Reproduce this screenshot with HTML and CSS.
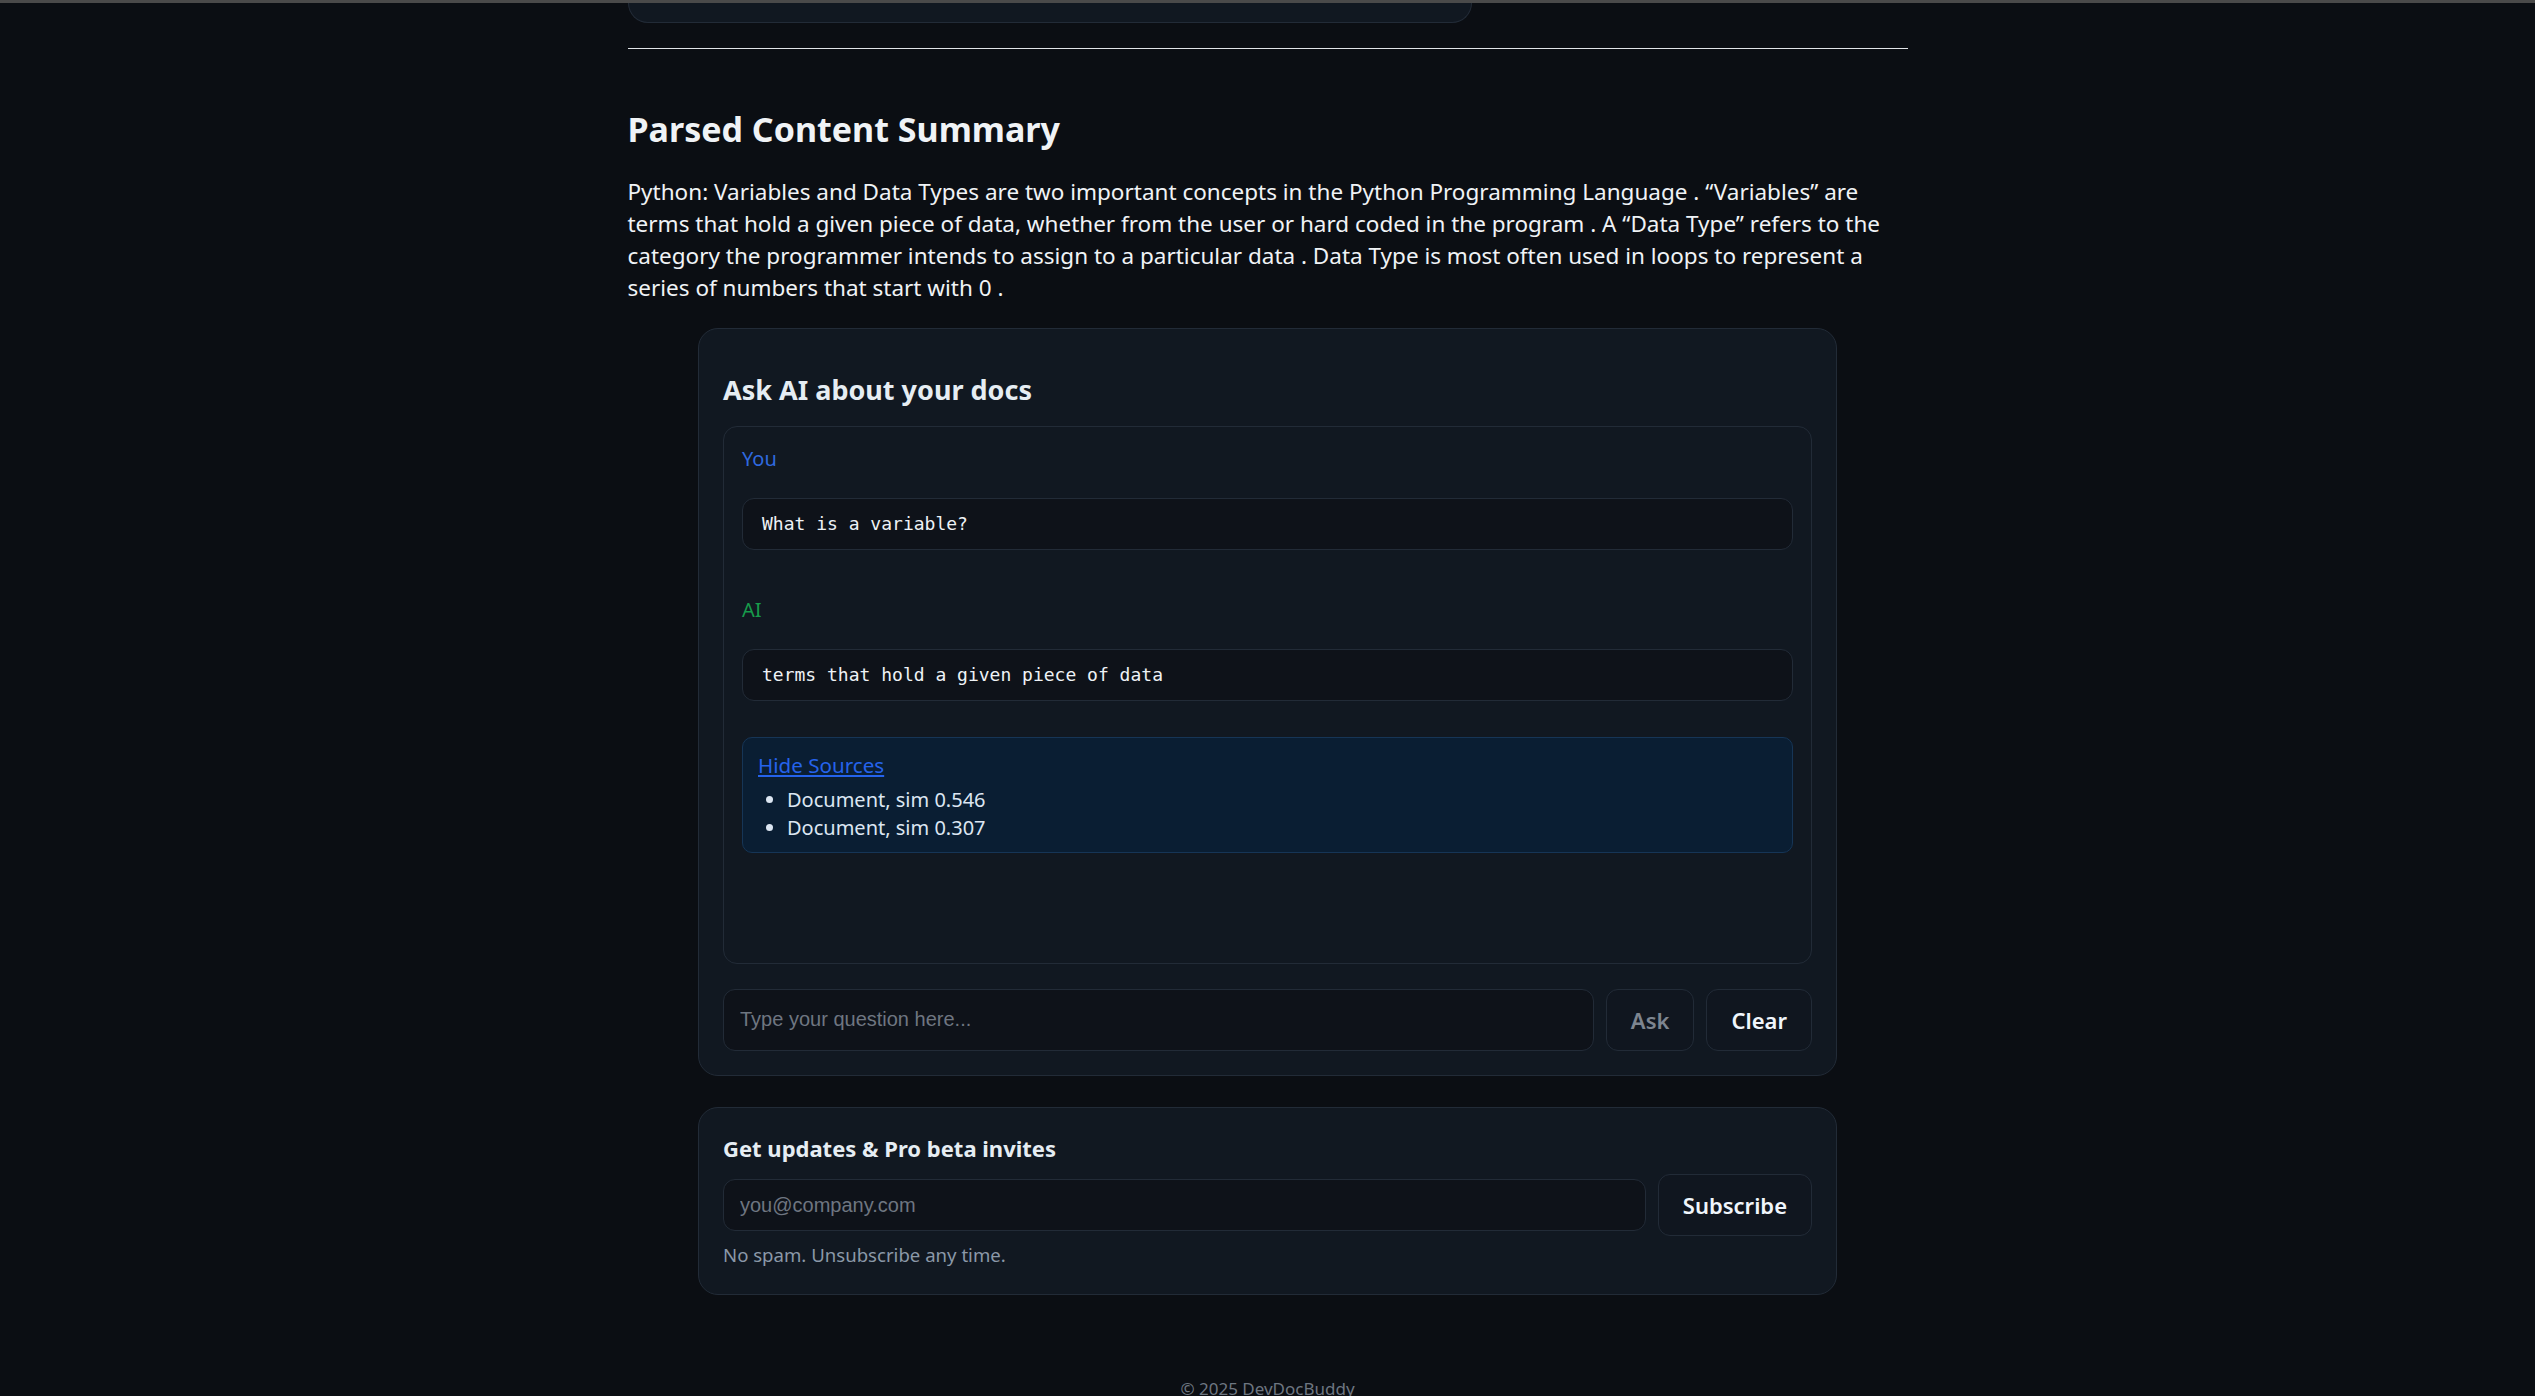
FILE: index.html
```html
<!DOCTYPE html>
<html>
<head>
  <title>DevDocBuddy</title>
  <link rel="stylesheet" href="styles.css">
</head>
<body>
  <div class="topbar"></div>
  <main class="container">
    <div class="upload-row">
      <div class="upload-card"></div>
    </div>
    <hr class="divider">

    <section class="summary">
      <h2>Parsed Content Summary</h2>
      <p>Python: Variables and Data Types are two important concepts in the Python Programming Language . “Variables” are terms that hold a given piece of data, whether from the user or hard coded in the program . A “Data Type” refers to the category the programmer intends to assign to a particular data . Data Type is most often used in loops to represent a series of numbers that start with 0 .</p>
    </section>

    <section class="card ask">
      <h3>Ask AI about your docs</h3>
      <div class="chat">
        <div class="msg">
          <div class="who you">You</div>
          <pre class="bubble">What is a variable?</pre>
        </div>
        <div class="msg">
          <div class="who ai">AI</div>
          <pre class="bubble">terms that hold a given piece of data</pre>
          <div class="sources">
            <a href="#" class="toggle">Hide Sources</a>
            <ul>
              <li>Document, sim 0.546</li>
              <li>Document, sim 0.307</li>
            </ul>
          </div>
        </div>
      </div>
      <div class="ask-row">
        <input type="text" class="field" placeholder="Type your question here...">
        <button class="btn" disabled>Ask</button>
        <button class="btn">Clear</button>
      </div>
    </section>

    <section class="card subscribe">
      <h4>Get updates &amp; Pro beta invites</h4>
      <div class="sub-row">
        <input type="email" class="field email" placeholder="you@company.com">
        <button class="btn">Subscribe</button>
      </div>
      <div class="note">No spam. Unsubscribe any time.</div>
    </section>
  </main>
  <footer class="footer">© 2025 DevDocBuddy</footer>
</body>
</html>
```

FILE: styles.css
```css
body {
  margin: 0;
  background: #0b0e13;
  color: #e6edf3;
  font-family: "Noto Sans", "Segoe UI", sans-serif;
  font-size: 20px;
  line-height: 1.6;
}
.topbar {
  height: 3px;
  background: #4a4a4a;
}
.container {
  max-width: 1280px;
  margin: 0 auto;
}
.upload-row {
  display: flex;
}
.upload-card {
  width: 844px;
  height: 20px;
  box-sizing: border-box;
  background: #111821;
  border: 1px solid #222b37;
  border-top: none;
  border-radius: 0 0 20px 20px;
}
.divider {
  border: none;
  border-top: 1px solid #e1e4e8;
  margin: 25px 0 0;
}
.summary h2 {
  font-size: 34px;
  line-height: 42.5px;
  font-weight: 700;
  margin: 59px 0 25px;
  color: #f0f3f6;
}
.summary p {
  margin: 0;
  font-size: 22.5px;
  line-height: 32.3px;
  color: #f0f3f6;
}
.card {
  max-width: 1139px;
  box-sizing: border-box;
  margin: 23px auto 0;
  padding: 24px;
  background: #111821;
  border: 1px solid #222b37;
  border-radius: 20px;
}
.ask h3 {
  font-size: 27px;
  line-height: 36px;
  font-weight: 700;
  margin: 19px 0 18px;
}
.chat {
  height: 538px;
  box-sizing: border-box;
  padding: 17px 18px;
  border: 1px solid #222b37;
  border-radius: 14px;
  overflow: auto;
}
.msg {
  margin-bottom: 45px;
}
.who {
  line-height: 30px;
  margin-bottom: 24px;
}
.who.you {
  color: #2f69df;
}
.who.ai {
  color: #179b4b;
}
.bubble {
  margin: 0;
  padding: 14px 19px;
  font-family: "DejaVu Sans Mono", "Liberation Mono", monospace;
  font-size: 18px;
  line-height: 22px;
  color: #eef2f6;
  background: #0e1219;
  border: 1px solid #222b37;
  border-radius: 12px;
  white-space: pre-wrap;
}
.sources {
  margin-top: 36px;
  padding: 13px 15px 10px;
  line-height: 28px;
  background: #0a1e33;
  border: 1px solid #163556;
  border-radius: 10px;
}
.toggle {
  color: #2563eb;
  font-size: 20.6px;
}
.sources ul {
  margin: 6px 0 0;
  padding-left: 29px;
  color: #dce6f2;
}
.ask-row,
.sub-row {
  display: flex;
  align-items: center;
  gap: 12px;
}
.ask-row {
  margin-top: 25px;
}
.field {
  flex: 1;
  height: 62px;
  box-sizing: border-box;
  padding: 0 16px;
  font-family: "Liberation Sans", Arial, sans-serif;
  font-size: 20px;
  color: #e6edf3;
  background: #0e1219;
  border: 1px solid #222b37;
  border-radius: 12px;
  outline: none;
}
.field::placeholder {
  color: #6e7681;
}
.field.email {
  height: 52px;
}
.btn {
  height: 62px;
  padding: 0 24px;
  font-family: "Noto Sans", "Segoe UI", sans-serif;
  font-size: 22px;
  font-weight: 600;
  color: #f0f6fc;
  background: #10161f;
  border: 1px solid #222b37;
  border-radius: 12px;
  cursor: pointer;
}
.btn:disabled {
  color: #7d8590;
  cursor: default;
}
.subscribe {
  margin-top: 31px;
  padding-bottom: 26px;
}
.subscribe h4 {
  font-size: 22px;
  line-height: 30.8px;
  font-weight: 700;
  margin: 1px 0 11px;
}
.note {
  margin-top: 5px;
  font-size: 18.6px;
  line-height: 27px;
  color: #8b98a8;
}
.footer {
  padding: 81px 0 40px;
  text-align: center;
  font-size: 17px;
  line-height: 25.5px;
  color: #6e7681;
}
```
